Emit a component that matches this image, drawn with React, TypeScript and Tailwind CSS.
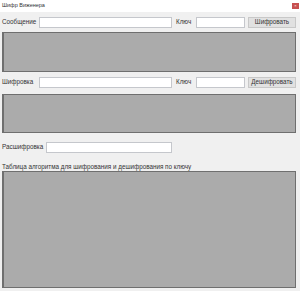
import React from "react";

const font = { fontFamily: '"Liberation Sans", Arial, sans-serif' };

function Input({ w }: { w: string }) {
  return <div className={`${w} shrink-0 h-[11px] bg-white border border-[#c5c7cc] box-border`} />;
}

function Btn({ label }: { label: string }) {
  return (
    <div className="w-[48px] shrink-0 h-[11px] bg-[#e1e1e1] border border-[#c8c8c8] box-border flex items-center justify-center text-[6.3px] leading-none text-[#333]">
      {label}
    </div>
  );
}

function Box({ h }: { h: string }) {
  return <div className={`${h} w-[294px] ml-[2px] bg-[#ababab] border border-[#6f6f6f] border-l-2 box-border`} />;
}

export default function App() {
  return (
    <div className="w-[300px] h-[291px] bg-[#f0f0f0] flex flex-col overflow-hidden" style={font}>
      <div className="h-[12px] bg-white flex items-start justify-between">
        <span className="text-[5.5px] leading-none text-[#333] ml-[2px] mt-[3px]">Шифр Виженера</span>
        <div className="w-[7px] h-[6px] bg-[#c75050] mt-[3px] mr-[1px] flex items-center justify-center">
          <span className="text-[4px] leading-none text-white">×</span>
        </div>
      </div>

      <div className="flex items-center h-[11px] mt-[5px] text-[6.3px] leading-none text-[#333]">
        <span className="w-[39px] shrink-0 pl-[2px]">Сообщение</span>
        <Input w="w-[133px]" />
        <span className="w-[24px] shrink-0 pl-[4px]">Ключ</span>
        <Input w="w-[49px]" />
        <div className="w-[3px] shrink-0" />
        <Btn label="Шифровать" />
      </div>

      <div className="mt-[4px]">
        <Box h="h-[40px]" />
      </div>

      <div className="flex items-center h-[11px] mt-[5px] text-[6.3px] leading-none text-[#333]">
        <span className="w-[39px] shrink-0 pl-[2px]">Шифровка</span>
        <Input w="w-[133px]" />
        <span className="w-[24px] shrink-0 pl-[4px]">Ключ</span>
        <Input w="w-[49px]" />
        <div className="w-[3px] shrink-0" />
        <Btn label="Дешифровать" />
      </div>

      <div className="mt-[6px]">
        <Box h="h-[39px]" />
      </div>

      <div className="flex items-center h-[11px] mt-[9px] text-[6.3px] leading-none text-[#333]">
        <span className="w-[46px] shrink-0 pl-[2px]">Расшифровка</span>
        <Input w="w-[126px]" />
      </div>

      <div className="h-[7px] mt-[11px] pl-[2px] text-[6.3px] leading-none text-[#333]">
        Таблица алгоритма для шифрования и дешифрования по ключу
      </div>

      <div>
        <Box h="h-[117px]" />
      </div>
    </div>
  );
}
